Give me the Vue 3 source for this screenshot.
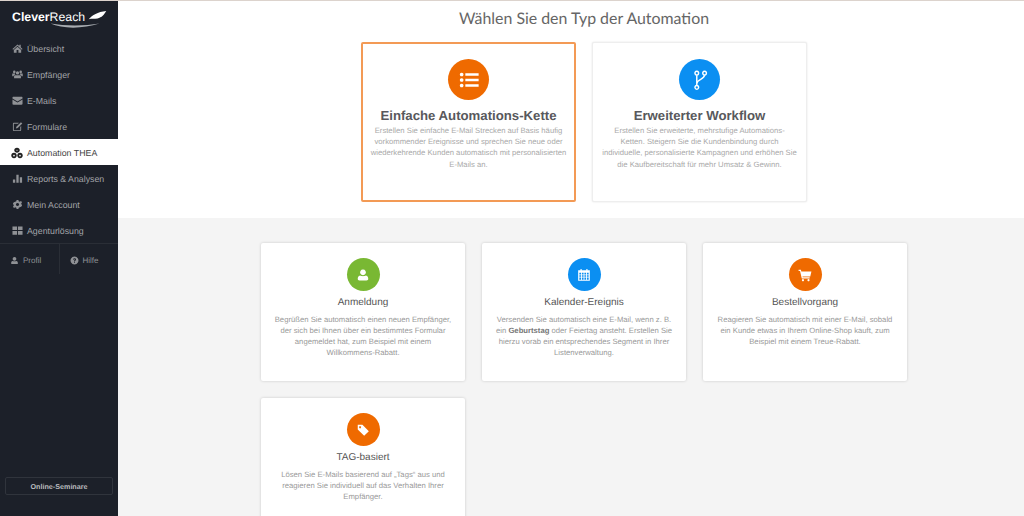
<template>
  <div class="app-shell">
    <aside class="sidebar">
      <div class="logo">
        <span class="logo-text"><b>Clever</b>Reach</span>
        <svg class="logo-wing" viewBox="0 0 26 14">
          <path d="M1 12 C6 7 13 2 25 1 C22 6 19 10 13 11 C9 11.500 5 11 1 12z" fill="#fff" />
        </svg>
        <svg class="logo-swoosh" viewBox="0 0 100 10">
          <path d="M1 1 C25 12 65 12 99 1 C70 6 30 6 1 1z" fill="#a9adb2" />
        </svg>
      </div>
      <nav class="menu">
        <a
          v-for="item in menu"
          :key="item.label"
          class="menu-item"
          :class="{ active: item.active }"
        >
          <svg class="menu-icon" viewBox="0 0 24 24"><path :d="item.icon" fill-rule="evenodd" /></svg>
          {{ item.label }}
        </a>
      </nav>
      <div class="side-footer">
        <a class="foot-link">
          <svg class="foot-icon" viewBox="0 0 24 24"><path :d="icons.user" /></svg>
          Profil
        </a>
        <a class="foot-link">
          <svg class="foot-icon" viewBox="0 0 24 24"><path :d="icons.help" fill-rule="evenodd" /></svg>
          Hilfe
        </a>
      </div>
      <div class="side-bottom">
        <button class="seminar-btn">Online-Seminare</button>
      </div>
    </aside>

    <main class="main-content">
      <section class="top-section">
        <h1>Wählen Sie den Typ der Automation</h1>
        <div class="big-row">
          <div
            v-for="card in bigCards"
            :key="card.title"
            class="big-card"
            :class="{ selected: card.selected }"
          >
            <div class="circle big" :class="card.color">
              <svg v-if="card.stroke" viewBox="0 0 24 24">
                <path :d="card.icon" class="stroke-icon" />
              </svg>
              <svg v-else viewBox="0 0 24 24"><path :d="card.icon" fill-rule="evenodd" /></svg>
            </div>
            <h2>{{ card.title }}</h2>
            <p>{{ card.text }}</p>
          </div>
        </div>
      </section>

      <section class="bottom-section">
        <div class="small-grid">
          <div v-for="card in smallCards" :key="card.title" class="small-card">
            <div class="circle small" :class="card.color">
              <svg viewBox="0 0 24 24"><path :d="card.icon" fill-rule="evenodd" /></svg>
            </div>
            <h3>{{ card.title }}</h3>
            <p v-if="card.bold">
              {{ card.text }} <b>{{ card.bold }}</b> {{ card.after }}
            </p>
            <p v-else>{{ card.text }}</p>
          </div>
        </div>
      </section>
    </main>
  </div>
</template>

<script setup>
const icons = {
  home: 'M12 3 L1 13 L2.500 14.500 L12 6 L21.500 14.500 L23 13 L19 9.400 V4 H16 V6.700z M12 8 L4 15 V21 H10 V15.500 H14 V21 H20 V15z',
  users:
    'M12 5a3.600 3.600 0 1 1 0 7.200a3.600 3.600 0 0 1 0-7.200z M5 3.500a2.800 2.800 0 1 1 0 5.600a2.800 2.800 0 0 1 0-5.600z M19 3.500a2.800 2.800 0 1 1 0 5.600a2.800 2.800 0 0 1 0-5.600z M6.500 13.500 H17.500 C19 13.500 19.500 15 19.500 17 V20 H4.500 V17 C4.500 15 5 13.500 6.500 13.500z M1 10 H6 C6.500 11 7 12 7.500 12.500 C4.500 12.500 3.500 14 3.300 16 H0.500 V12 C0.500 11 0.500 10 1 10z M18 10 H23 C23.500 10 23.500 11 23.500 12 V16 H20.700 C20.500 14 19.500 12.500 16.500 12.500 C17 12 17.500 11 18 10z',
  mail: 'M3 4 H21 C22 4 23 5 23 6 V7.500 L12 14 L1 7.500 V6 C1 5 2 4 3 4z M1 10 L12 16.500 L23 10 V19 C23 20 22 21 21 21 H3 C2 21 1 20 1 19z',
  edit: 'M4 4 H15 L13 6 H4.500 C4 6 4 6.500 4 7 V19 C4 19.500 4.500 20 5 20 H17 C17.500 20 18 19.500 18 19 V13 L20 11 V19 C20 21 19 22 17 22 H5 C3 22 2 21 2 19 V7 C2 5 3 4 4 4z M19.500 2.500 L22.500 5.500 L12.500 15.500 L8.500 16.500 L9.500 12.500z',
  automation:
    'M12 1.500 C15.500 1.500 17.500 4 17.500 6.500 C17.500 9.500 15 11.500 12 11.500 C9 11.500 6.500 9.500 6.500 6.500 C6.500 4 8.500 1.500 12 1.500z M12 5.500 a1 1 0 1 0 0.010 0z M6 11.500 C9.500 11.500 11.500 14 11.500 17 C11.500 20 9 22.500 6 22.500 C3 22.500 0.500 20 0.500 17 C0.500 14 2.500 11.500 6 11.500z M6 15.500 a1.500 1.500 0 1 0 0.010 0z M18 11.500 C21.500 11.500 23.500 14 23.500 17 C23.500 20 21 22.500 18 22.500 C15 22.500 12.500 20 12.500 17 C12.500 14 14.500 11.500 18 11.500z M18 15.500 a1.500 1.500 0 1 0 0.010 0z',
  chart: 'M2 14 H7 V21 H2z M9.500 4 H14.500 V21 H9.500z M17 9 H22 V21 H17z',
  cog: 'M10 2 H14 L14.600 5 L17 6 L19.600 4.300 L22 7 L20 9.500 L21 12 L22 14.500 L19.700 17 L17 18 L14.600 19 L14 22 H10 L9.400 19 L7 18 L4.400 19.700 L2 17 L4 14.500 L3 12 L2 9.500 L4.300 7 L7 6 L9.400 5z M12 8.500 a3.500 3.500 0 1 0 0.010 0z',
  grid: 'M1 3 H11 V11 H1z M13 3 H23 V11 H13z M1 13 H11 V21 H1z M13 13 H23 V21 H13z',
  user: 'M12 2.500 a5 5 0 1 1 -0.010 0z M7 13 C9 14.500 15 14.500 17 13 C20 13.500 21 16 21 19 C21 20.500 20 21.500 18 21.500 H6 C4 21.500 3 20.500 3 19 C3 16 4 13.500 7 13z',
  help: 'M12 1.500 a10.500 10.500 0 1 1 -0.010 0z M8 9 L10.500 10 C10.800 8.800 11.300 8.400 12 8.400 C12.800 8.400 13.300 8.800 13.300 9.400 C13.300 10.800 10.700 11 10.700 14 H13.300 C13.300 12.500 16 12 16 9.300 C16 7.200 14.200 6 12 6 C10 6 8.500 7 8 9z M10.700 15.300 V18 H13.300 V15.300z',
  list: 'M4 4 a2 2 0 1 1 -0.010 0z M4 10 a2 2 0 1 1 -0.010 0z M4 16 a2 2 0 1 1 -0.010 0z M8 4.700 H22.500 V7.300 H8z M8 10.700 H22.500 V13.300 H8z M8 16.700 H22.500 V19.300 H8z',
  branch:
    'M8.500 2.500 a2 2 0 1 0 0.010 0z M17 2.500 a2 2 0 1 0 0.010 0z M8.500 18 a2 2 0 1 0 0.010 0z M8.500 6.500 V18 M17 6.500 C17 11.500 8.500 11 8.500 16',
  calendar:
    'M6 1.500 H8 V4 H16 V1.500 H18 V4 H22 V22 H2 V4 H6z M4 8 V11 H7 V8z M8.500 8 V11 H11.300 V8z M12.700 8 V11 H15.500 V8z M17 8 V11 H20 V8z M4 12.300 V15 H7 V12.300z M8.500 12.300 V15 H11.300 V12.300z M12.700 12.300 V15 H15.500 V12.300z M17 12.300 V15 H20 V12.300z M4 16.300 V20 H7 V16.300z M8.500 16.300 V20 H11.300 V16.300z M12.700 16.300 V20 H15.500 V16.300z M17 16.300 V20 H20 V16.300z',
  cart: 'M1 3 H5 L5.700 6 H23 L21 14.500 H7.700 L8 16 H20 V18 H6.500 L3.500 5 H1z M8.500 19 a1.800 1.800 0 1 1 -0.010 0z M18 19 a1.800 1.800 0 1 1 -0.010 0z',
  tag: 'M3 3 H11 L22 14 L14 22 L3 11z M7 5.500 a1.700 1.700 0 1 0 0.010 0z',
}

const menu = [
  { label: 'Übersicht', icon: icons.home },
  { label: 'Empfänger', icon: icons.users },
  { label: 'E-Mails', icon: icons.mail },
  { label: 'Formulare', icon: icons.edit },
  { label: 'Automation THEA', icon: icons.automation, active: true },
  { label: 'Reports & Analysen', icon: icons.chart },
  { label: 'Mein Account', icon: icons.cog },
  { label: 'Agenturlösung', icon: icons.grid },
]

const bigCards = [
  {
    title: 'Einfache Automations-Kette',
    text: 'Erstellen Sie einfache E-Mail Strecken auf Basis häufig\nvorkommender Ereignisse und sprechen Sie neue oder\nwiederkehrende Kunden automatisch mit personalisierten\nE-Mails an.',
    icon: icons.list,
    color: 'orange',
    selected: true,
  },
  {
    title: 'Erweiterter Workflow',
    text: 'Erstellen Sie erweiterte, mehrstufige Automations-\nKetten. Steigern Sie die Kundenbindung durch\nindividuelle, personalisierte Kampagnen und erhöhen Sie\ndie Kaufbereitschaft für mehr Umsatz & Gewinn.',
    icon: icons.branch,
    color: 'blue',
    stroke: true,
  },
]

const smallCards = [
  {
    title: 'Anmeldung',
    text: 'Begrüßen Sie automatisch einen neuen Empfänger, der sich bei Ihnen über ein bestimmtes Formular angemeldet hat, zum Beispiel mit einem Willkommens-Rabatt.',
    icon: icons.user,
    color: 'green',
  },
  {
    title: 'Kalender-Ereignis',
    text: 'Versenden Sie automatisch eine E-Mail, wenn z. B. ein',
    bold: 'Geburtstag',
    after: 'oder Feiertag ansteht. Erstellen Sie hierzu vorab ein entsprechendes Segment in Ihrer Listenverwaltung.',
    icon: icons.calendar,
    color: 'blue',
  },
  {
    title: 'Bestellvorgang',
    text: 'Reagieren Sie automatisch mit einer E-Mail, sobald ein Kunde etwas in Ihrem Online-Shop kauft, zum Beispiel mit einem Treue-Rabatt.',
    icon: icons.cart,
    color: 'orange',
  },
  {
    title: 'TAG-basiert',
    text: 'Lösen Sie E-Mails basierend auf „Tags“ aus und reagieren Sie individuell auf das Verhalten Ihrer Empfänger.',
    icon: icons.tag,
    color: 'orange',
  },
]
</script>

<style scoped>
* {
  box-sizing: border-box;
  font-family: "Liberation Sans", Arial, sans-serif;
  text-rendering: geometricPrecision;
}

.app-shell {
  display: flex;
  height: 516px;
  overflow: hidden;
  border-top: 1px solid #dcd3cd;
  background: #f4f4f4;
}

.sidebar {
  width: 118px;
  flex-shrink: 0;
  background: #1c2029;
  display: flex;
  flex-direction: column;
  color: #a2a4a8;
}

.logo {
  position: relative;
  height: 34px;
  padding: 8px 0 0 12px;
}

.logo-text {
  font-size: 12.300px;
  line-height: 16px;
  color: #fff;
  display: block;
}

.logo-wing {
  position: absolute;
  left: 88px;
  top: 9px;
  width: 19px;
  height: 11px;
}

.logo-swoosh {
  position: absolute;
  left: 50px;
  top: 21px;
  width: 50px;
  height: 7px;
}

.menu {
  display: flex;
  flex-direction: column;
}

.menu-item {
  height: 26px;
  display: flex;
  align-items: center;
  gap: 4px;
  padding: 1px 0 0 12px;
  font-size: 8.800px;
  color: #a2a4a8;
}

.menu-item.active {
  background: #fff;
  color: #444;
  padding-left: 11px;
}

.menu-icon {
  width: 11px;
  height: 11px;
  fill: #8f9195;
  flex-shrink: 0;
}

.menu-item.active .menu-icon {
  fill: #222;
  width: 12px;
  height: 12px;
}

.side-footer {
  display: flex;
  height: 31px;
  border-top: 1px solid #2a2e36;
}

.foot-link {
  flex: 1;
  display: flex;
  align-items: center;
  gap: 4px;
  padding: 2px 0 0 10px;
  font-size: 8px;
  color: #8f9195;
}

.foot-link + .foot-link {
  border-left: 1px solid #2a2e36;
}

.foot-icon {
  width: 9px;
  height: 9px;
  fill: #8f9195;
}

.side-bottom {
  margin-top: auto;
  padding: 0 5px 21px;
}

.seminar-btn {
  width: 100%;
  height: 18px;
  background: transparent;
  border: 1px solid #30343c;
  border-radius: 2px;
  color: #b9bbbf;
  font-size: 7.200px;
  font-weight: 700;
  padding: 0;
}

.main-content {
  flex: 1;
  min-width: 0;
  display: flex;
  flex-direction: column;
}

.top-section {
  height: 217px;
  flex-shrink: 0;
  background: #fff;
  display: flex;
  flex-direction: column;
  align-items: center;
  padding-left: 26px;
}

h1 {
  margin: 8px 0 0;
  height: 33px;
  font-family: "Lato", sans-serif;
  font-size: 15.900px;
  line-height: 20px;
  font-weight: 400;
  color: #666;
}

.big-row {
  display: flex;
  gap: 16px;
}

.big-card {
  width: 215px;
  height: 160px;
  background: #fff;
  border: 1px solid #eee;
  border-radius: 2px;
  box-shadow: 0 0 2px rgba(0, 0, 0, 0.12);
  padding: 16px 4px 0;
  text-align: center;
}

.big-card.selected {
  border: 2px solid #f39a55;
  padding: 15px 3px 0;
  box-shadow: none;
}

.big-card h2 {
  margin: 7px 0 0;
  font-size: 13.200px;
  line-height: 18px;
  font-weight: 700;
  color: #58585c;
}

.big-card p {
  margin: 0;
  font-size: 7.700px;
  line-height: 11.200px;
  color: #a9a9a9;
  white-space: pre-line;
}

.circle {
  border-radius: 50%;
  margin: 0 auto;
  display: flex;
  align-items: center;
  justify-content: center;
  fill: #fff;
}

.circle.big {
  width: 41px;
  height: 41px;
}

.circle.big svg {
  width: 22px;
  height: 22px;
}

.circle.small {
  width: 33px;
  height: 33px;
}

.circle.small svg {
  width: 14px;
  height: 14px;
}

.stroke-icon {
  fill: none;
  stroke: #fff;
  stroke-width: 1.600;
}

.orange {
  background: #ef6a00;
}

.blue {
  background: #0b8ff2;
}

.green {
  background: #79b833;
}

.bottom-section {
  flex: 1;
  display: flex;
  justify-content: center;
  padding: 25px 0 0 26px;
}

.small-grid {
  display: grid;
  grid-template-columns: repeat(3, 204px);
  grid-auto-rows: 138px;
  gap: 17px;
}

.small-card {
  background: #fff;
  border-radius: 2px;
  box-shadow: 0 0 3px rgba(0, 0, 0, 0.18);
  padding: 15px 10px 0;
  text-align: center;
}

.small-card h3 {
  margin: 5px 0 0;
  font-size: 10px;
  line-height: 14px;
  font-weight: 400;
  color: #555;
}

.small-card p {
  margin: 4px 0 0;
  font-size: 7.700px;
  line-height: 11.100px;
  color: #999;
}

.small-card p b {
  color: #777;
}
</style>

<style>
html,
body {
  margin: 0;
  overflow: hidden;
}
</style>
